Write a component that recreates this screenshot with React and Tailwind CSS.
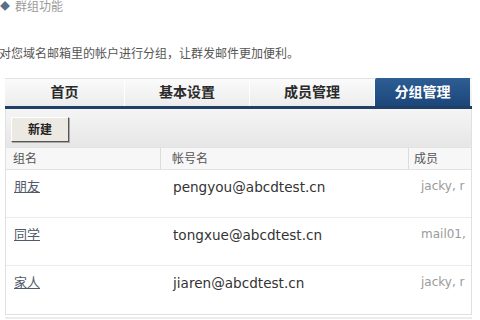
export default function App() {
  const tabs = [
    { label: "首页", w: "w-[120px]" },
    { label: "基本设置", w: "w-[125px]" },
    { label: "成员管理", w: "w-[125px]" },
  ];
  const rows = [
    { name: "朋友", account: "pengyou@abcdtest.cn", members: "jacky, r" },
    { name: "同学", account: "tongxue@abcdtest.cn", members: "mail01," },
    { name: "家人", account: "jiaren@abcdtest.cn", members: "jacky, r" },
  ];

  return (
    <div className="w-[480px] h-[320px] overflow-hidden bg-white font-['Liberation_Sans','Noto_Sans_CJK_SC',sans-serif]">
      {/* title */}
      <div className="h-[13px] flex items-center text-[12px] text-[#9a9a9a] leading-none">
        <span className="text-[#5a6e8a] text-[10px] mr-[5px]">◆</span>
        <span>群组功能</span>
      </div>

      {/* description */}
      <div className="mt-[31px] h-[20px] flex items-center text-[12px] text-[#555] -ml-[1px]">
        对您域名邮箱里的帐户进行分组，让群发邮件更加便利。
      </div>

      {/* tabs */}
      <div className="mt-[14px] ml-[5px] w-[467px]">
        <div className="flex h-[28px] bg-gradient-to-b from-[#fbfbfb] to-[#ececec] border-t border-[#e2e2e2]">
          {tabs.map((t) => (
            <div
              key={t.label}
              className={t.w + " flex items-center justify-center text-[#2a2a2a] font-bold text-[14px] border-r border-white"}
            >
              {t.label}
            </div>
          ))}
          <div className="w-[95px] -mt-[1px] flex items-center justify-center bg-gradient-to-b from-[#2d5e94] to-[#1c467a] text-white font-bold text-[14px] rounded-tl-[2px]">
            分组管理
          </div>
        </div>
        <div className="h-[3px] bg-[#1f3f66]"></div>

        {/* table box */}
        <div className="border-l border-r border-b border-[#e0e0e0]">
          {/* toolbar */}
          <div className="h-[38px] flex items-center pl-[5px] pt-[3px] bg-gradient-to-b from-[#f5f5f5] to-[#e6e6e6]">
            <button className="w-[58px] h-[25px] text-[12px] font-bold text-[#222] bg-[#ece9e2] border border-t-white border-l-white border-r-[#555] border-b-[#555] shadow-[1px_1px_0_#aaa]">
              新建
            </button>
          </div>

          {/* header */}
          <div className="flex h-[23px] items-center text-[12px] text-[#555] bg-[#f7f7f7] border-t border-b border-[#e2e2e2]">
            <div className="w-[155px] pl-[7px] h-full flex items-center border-r border-[#dcdcdc]">组名</div>
            <div className="w-[248px] pl-[11px] h-full flex items-center border-r border-[#dcdcdc]">帐号名</div>
            <div className="flex-1 pl-[5px] h-full flex items-center">成员</div>
          </div>

          {/* rows */}
          {rows.map((r, i) => (
            <div
              key={r.name}
              className={
                "flex h-[48px] pt-[7px] " +
                (i < rows.length - 1 ? "border-b border-[#ececec]" : "")
              }
            >
              <div className="w-[155px] pl-[8px] text-[#505a6a] underline text-[13px]">{r.name}</div>
              <div className="w-[248px] pl-[12px] text-[#333] text-[13.6px] font-['DejaVu_Sans',sans-serif]">{r.account}</div>
              <div className="flex-1 pl-[12px] text-[#9a9a9a] text-[12px] font-['DejaVu_Sans',sans-serif] whitespace-nowrap overflow-hidden">{r.members}</div>
            </div>
          ))}
        </div>
        <div className="mt-[2px] h-[2px] bg-[#ececec]"></div>
      </div>
    </div>
  );
}
